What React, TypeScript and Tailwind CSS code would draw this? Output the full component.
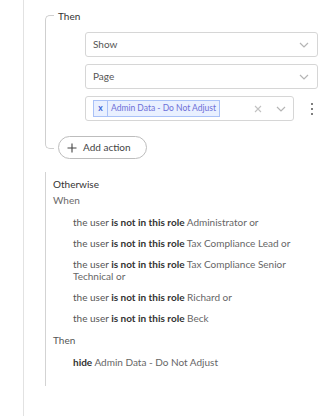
import React from "react";

function Chevron() {
  return (
    <svg width="10" height="6" viewBox="0 0 10 6" fill="none" stroke="#b5b5b5" strokeWidth="1.2">
      <path d="M1 1l4 4 4-4" />
    </svg>
  );
}

function Select({ label }: { label: string }) {
  return (
    <div className="flex h-[25px] w-[233px] items-center justify-between rounded-[3px] border border-[#d6d6d6] bg-white pl-[7px] pr-[8px] text-[10px] text-[#555]">
      <span>{label}</span>
      <Chevron />
    </div>
  );
}

function Cond({ children }: { children: React.ReactNode }) {
  return <div className="text-[10px] leading-[12px] text-[#555]">{children}</div>;
}

export default function App() {
  const roles = [
    "Administrator or",
    "Tax Compliance Lead or",
    "Tax Compliance Senior Technical or",
    "Richard or",
    "Beck",
  ];
  return (
    <div className="h-[416px] w-[335px] overflow-hidden bg-white pl-[23px] font-['Lato',sans-serif]">
      <div className="flex h-full flex-col border-l border-[#e2e2e2] pl-[21px] pt-[10px]">
        {/* Then block */}
        <div className="flex">
          <div className="mb-[10px] mt-[5px] w-[9px] shrink-0 rounded-l-[5px] border-y border-l border-[#cfcfcf]" />
          <div className="ml-[4px] flex flex-col">
            <div className="text-[10px] leading-[12px] text-[#333]">Then</div>
            <div className="ml-[27px] mt-[10px] flex flex-col gap-[7px]">
              <Select label="Show" />
              <Select label="Page" />
              <div className="flex items-center">
                <div className="flex h-[25px] w-[209px] items-center justify-between rounded-[3px] border border-[#d6d6d6] bg-white pl-[7px] pr-[7px]">
                  <div className="flex h-[17px] items-stretch border border-[#a9c1f7] bg-[#e9f0ff] text-[8.5px]">
                    <span className="flex w-[14px] items-center justify-center border-r border-[#a9c1f7] font-bold text-[#3a63d6]">
                      x
                    </span>
                    <span className="flex items-center px-[3px] text-[#6d6fd8]">Admin Data - Do Not Adjust</span>
                  </div>
                  <div className="flex items-center gap-[14px]">
                    <svg width="8" height="8" viewBox="0 0 8 8" stroke="#c2c2c2" strokeWidth="1.1">
                      <path d="M1 1l6 6M7 1L1 7" />
                    </svg>
                    <Chevron />
                  </div>
                </div>
                <div className="ml-[17px] flex flex-col gap-[3px]">
                  <span className="h-[2px] w-[2px] rounded-full bg-[#555]" />
                  <span className="h-[2px] w-[2px] rounded-full bg-[#555]" />
                  <span className="h-[2px] w-[2px] rounded-full bg-[#555]" />
                </div>
              </div>
            </div>
            <div className="mt-[15px] flex h-[23px] w-[89px] items-center gap-[6px] rounded-full border border-[#bdbdbd] bg-white pl-[8px] text-[10px] text-[#444]">
              <svg width="10" height="10" viewBox="0 0 10 10" stroke="#444" strokeWidth="1.1">
                <path d="M5 0.5v9M0.5 5h9" />
              </svg>
              <span>Add action</span>
            </div>
          </div>
        </div>

        {/* Otherwise block */}
        <div className="mt-[13px] flex w-[270px] flex-col border-l border-[#d3d3d3] pb-[18px] pl-[7px] pt-[6px]">
          <div className="text-[10px] leading-[12px] text-[#333]">Otherwise</div>
          <div className="mt-[4px] text-[10px] leading-[12px] text-[#6a6a6a]">When</div>
          <div className="ml-[20px] mt-[10px] flex w-[230px] flex-col gap-[9px]">
            {roles.map((r) => (
              <Cond key={r}>
                the user <span className="font-bold text-[#333]">is not in this role</span>{" "}
                <span className="text-[#666]">{r}</span>
              </Cond>
            ))}
          </div>
          <div className="mt-[10px] text-[10px] leading-[12px] text-[#555]">Then</div>
          <div className="ml-[20px] mt-[10px] text-[10px] leading-[12px] text-[#666]">
            <span className="font-bold text-[#333]">hide</span> Admin Data - Do Not Adjust
          </div>
        </div>
      </div>
    </div>
  );
}
